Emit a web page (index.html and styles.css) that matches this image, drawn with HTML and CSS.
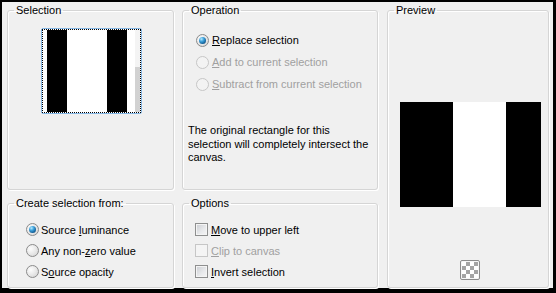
FILE: index.html
```html
<!DOCTYPE html>
<html>
<head>
<meta charset="utf-8">
<link rel="stylesheet" href="styles.css">
</head>
<body>
<div class="window">
  <fieldset class="box sel">
    <legend>Selection</legend>
    <div class="thumb">
      <div class="focus">
        <span class="pad"></span><span class="blk"></span><span class="wht"></span><span class="blk"></span><span class="wht2"></span><span class="scroll"></span>
      </div>
    </div>
  </fieldset>
  <fieldset class="box op">
    <legend>Operation</legend>
    <div class="row"><span class="radio checked"></span><span class="lbl"><u>R</u>eplace selection</span></div>
    <div class="row dis"><span class="radio"></span><span class="lbl"><u>A</u>dd to current selection</span></div>
    <div class="row dis"><span class="radio"></span><span class="lbl"><u>S</u>ubtract from current selection</span></div>
    <p class="note">The original rectangle for this<br>selection will completely intersect the<br>canvas.</p>
  </fieldset>
  <fieldset class="box preview">
    <legend>Preview</legend>
    <div class="pimg"><span class="pb1"></span><span class="pw"></span><span class="pb2"></span></div>
    <div class="checker"><span></span></div>
  </fieldset>
  <fieldset class="box create">
    <legend>Create selection from:</legend>
    <div class="row"><span class="radio checked"></span><span class="lbl">Source <u>l</u>uminance</span></div>
    <div class="row"><span class="radio"></span><span class="lbl">Any non-<u>z</u>ero value</span></div>
    <div class="row"><span class="radio"></span><span class="lbl">S<u>o</u>urce opacity</span></div>
  </fieldset>
  <fieldset class="box options">
    <legend>Options</legend>
    <div class="row"><span class="check"></span><span class="lbl"><u>M</u>ove to upper left</span></div>
    <div class="row dis"><span class="check"></span><span class="lbl"><u>C</u>lip to canvas</span></div>
    <div class="row"><span class="check"></span><span class="lbl"><u>I</u>nvert selection</span></div>
  </fieldset>
</div>
</body>
</html>
```
FILE: styles.css
```css
html, body {
  margin: 0;
  padding: 0;
  background: #000;
}
body {
  font-family: "Liberation Sans", Arial, sans-serif;
  font-size: 11px;
  color: #000;
}
.window {
  width: 556px;
  height: 293px;
  box-sizing: border-box;
  border: 2px solid #000;
  border-right-width: 3px;
  border-bottom-width: 5px;
  background: #f0f0f0;
  padding: 1px 0 0 5px;
  display: grid;
  grid-template-columns: 167px 196px 163px;
  grid-template-rows: 187px 92px;
  column-gap: 8px;
  row-gap: 6px;
}
.box {
  margin: 0;
  padding: 0;
  min-width: 0;
  box-sizing: border-box;
  border: 1px solid #d5d5d5;
  border-radius: 3px;
  box-shadow: inset 1px 1px 0 #fff, 1px 1px 0 #fff;
}
.box legend {
  margin-left: 6px;
  padding: 0 2px;
  line-height: 15px;
  font-size: 11px;
}
.sel { grid-column: 1; grid-row: 1; }
.op { grid-column: 2; grid-row: 1; }
.preview {
  grid-column: 3;
  grid-row: 1 / span 2;
  margin-left: 1px;
  display: flex;
  flex-direction: column;
  align-items: flex-start;
}
.create { grid-column: 1; grid-row: 2; }
.options { grid-column: 2; grid-row: 2; }

/* thumbnail */
.thumb {
  margin: 10px 0 0 33px;
  width: 101px;
  height: 86px;
  box-sizing: border-box;
  border: 1px solid #86b7e4;
  border-radius: 2px;
  background: #fff;
}
.focus {
  height: 100%;
  box-sizing: border-box;
  border: 1px dotted #000;
  display: flex;
}
.focus span { display: block; height: 100%; }
.pad { width: 4px; background: #fff; }
.blk { width: 20px; background: #000; }
.wht { width: 40px; background: #fff; }
.wht2 { width: 8px; background: #fff; }
.scroll {
  width: 5px;
  background: linear-gradient(#f4f4f4 0, #f4f4f4 37px, #d2d2d2 37px);
}

/* rows */
.row {
  display: flex;
  align-items: center;
  height: 22px;
  gap: 2px;
}
.op .row { margin-left: 13px; }
.create .row { margin-left: 18px; }
.options .row { margin-left: 12px; gap: 3px; }
.op .row:first-of-type { margin-top: 11px; }
.create .row, .options .row { height: 21px; }
.create .row:first-of-type, .options .row:first-of-type { margin-top: 8px; }
.lbl { white-space: nowrap; font-size: 11px; }
.dis .lbl { color: #a0a0a0; }
.op .lbl { padding-left: 1px; }

.radio {
  width: 13px;
  height: 13px;
  box-sizing: border-box;
  border-radius: 50%;
  border: 1px solid #8b8b8b;
  background: radial-gradient(circle at 35% 35%, #fdfdfd 0, #e6e6e6 55%, #cfcfcf 100%);
  position: relative;
  flex: none;
}
.radio.checked::after {
  content: "";
  position: absolute;
  left: 2px;
  top: 2px;
  width: 7px;
  height: 7px;
  border-radius: 50%;
  background: radial-gradient(circle at 35% 30%, #b7ecff 0, #3fa2dc 35%, #0f5a91 75%, #0a3d66 100%);
}
.dis .radio {
  border-color: #c6c6c6;
  background: #f3f3f3;
}
.check {
  width: 13px;
  height: 13px;
  box-sizing: border-box;
  border: 1px solid #8e8f8f;
  background: linear-gradient(135deg, #c9ccd1 0, #e9eaec 60%, #f5f5f5 100%);
  box-shadow: inset 0 0 0 1px #f4f4f4;
  flex: none;
}
.dis .check {
  border-color: #c6c6c6;
  background: #f4f4f4;
  box-shadow: none;
}

.note {
  margin: 29px 0 0 5px;
  line-height: 13.5px;
  font-size: 11px;
}

/* preview */
.pimg {
  margin: 84px 0 0 12px;
  width: 141px;
  height: 105px;
  display: flex;
}
.pimg span { display: block; height: 100%; }
.pb1 { width: 53px; background: #000; }
.pw { width: 53px; background: #fff; }
.pb2 { width: 35px; background: #000; }
.checker {
  margin: 53px 0 0 72px;
  width: 20px;
  height: 20px;
  box-sizing: border-box;
  border: 1px solid #8c8c8c;
  border-radius: 2px;
  background: #f6f6f6;
  padding: 1px;
}
.checker span {
  display: block;
  width: 16px;
  height: 16px;
  background: repeating-conic-gradient(#a4a4a4 0 25%, #ffffff 0 50%);
  background-size: 8px 8px;
}
```
